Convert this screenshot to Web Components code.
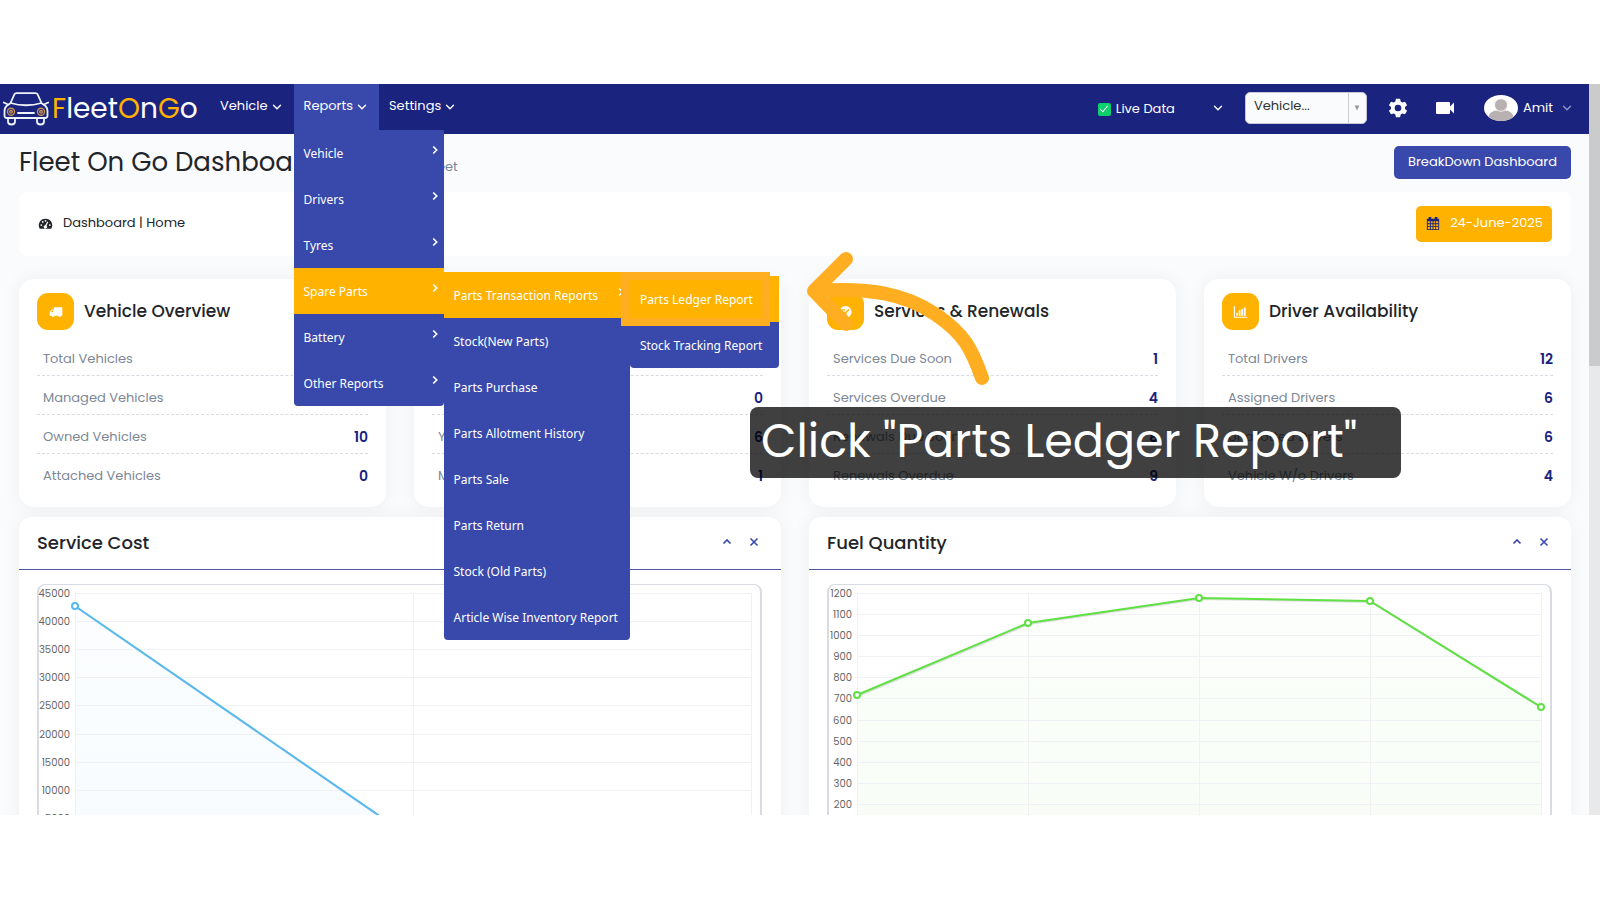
<!DOCTYPE html>
<html lang="en">
<head>
<meta charset="utf-8">
<meta name="viewport" content="width=device-width, initial-scale=1">
<title>Fleet On Go Dashboard</title>
<style>
html, body {
  margin: 0;
  background: #fff;
}

body {
  display: flex;
  box-sizing: border-box;
  height: 100vh;
  padding: 84px 0 85px;
  overflow: hidden;
  font-family: Poppins, Inter, sans-serif;
  font-size: 13px;
  line-height: 20px;
  color: #212529;

  --navy: #1a237e;
  --blue: #3949ab;
  --amber: #ffb300;
  --marker: #ffae22;
  --page: #fafbfd;
}
</style>
</head>
<body>

<fog-shell>
  <fog-navbar slot="top">
    <fog-nav-item label="Vehicle"></fog-nav-item>
    <fog-nav-item label="Reports" open>
      <fog-menu-item label="Vehicle" more></fog-menu-item>
      <fog-menu-item label="Drivers" more></fog-menu-item>
      <fog-menu-item label="Tyres" more></fog-menu-item>
      <fog-menu-item label="Spare Parts" more open>
        <fog-menu-item label="Parts Transaction Reports" more open>
          <fog-menu-item label="Parts Ledger Report" active marked></fog-menu-item>
          <fog-menu-item label="Stock Tracking Report"></fog-menu-item>
        </fog-menu-item>
        <fog-menu-item label="Stock(New Parts)"></fog-menu-item>
        <fog-menu-item label="Parts Purchase"></fog-menu-item>
        <fog-menu-item label="Parts Allotment History"></fog-menu-item>
        <fog-menu-item label="Parts Sale"></fog-menu-item>
        <fog-menu-item label="Parts Return"></fog-menu-item>
        <fog-menu-item label="Stock (Old Parts)"></fog-menu-item>
        <fog-menu-item label="Article Wise Inventory Report"></fog-menu-item>
      </fog-menu-item>
      <fog-menu-item label="Battery" more></fog-menu-item>
      <fog-menu-item label="Other Reports" more></fog-menu-item>
    </fog-nav-item>
    <fog-nav-item label="Settings"></fog-nav-item>
  </fog-navbar>

  <fog-page-head heading="Fleet On Go Dashboard" note="Manage Your Fleet"></fog-page-head>
  <fog-breadcrumb date="24-June-2025">Dashboard | Home</fog-breadcrumb>

  <fog-columns count="4">
    <fog-stat-card heading="Vehicle Overview" icon="truck">
      <fog-stat label="Total Vehicles">10</fog-stat>
      <fog-stat label="Managed Vehicles">0</fog-stat>
      <fog-stat label="Owned Vehicles">10</fog-stat>
      <fog-stat label="Attached Vehicles">0</fog-stat>
    </fog-stat-card>
    <fog-stat-card heading="Trips" icon="truck">
      <fog-stat label="Total">7</fog-stat>
      <fog-stat label="Today">0</fog-stat>
      <fog-stat label="Year">6</fog-stat>
      <fog-stat label="Month">1</fog-stat>
    </fog-stat-card>
    <fog-stat-card heading="Services &amp; Renewals" icon="gauge">
      <fog-stat label="Services Due Soon">1</fog-stat>
      <fog-stat label="Services Overdue">4</fog-stat>
      <fog-stat label="Renewals Due Soon">8</fog-stat>
      <fog-stat label="Renewals Overdue">9</fog-stat>
    </fog-stat-card>
    <fog-stat-card heading="Driver Availability" icon="bars">
      <fog-stat label="Total Drivers">12</fog-stat>
      <fog-stat label="Assigned Drivers">6</fog-stat>
      <fog-stat label="Unallotted Drivers">6</fog-stat>
      <fog-stat label="Vehicle W/o Drivers">4</fog-stat>
    </fog-stat-card>
  </fog-columns>

  <fog-columns count="2">
    <fog-panel heading="Service Cost">
      <fog-line-chart max="45000" step="5000" values="42700,1200,0" color="#56b9f0" gutter="36"></fog-line-chart>
    </fog-panel>
    <fog-panel heading="Fuel Quantity">
      <fog-line-chart max="1200" step="100" values="716,1060,1176,1160,659" color="#5fe043" gutter="28"></fog-line-chart>
    </fog-panel>
  </fog-columns>
</fog-shell>

<fog-callout>Click "Parts Ledger Report"</fog-callout>

<script>
const ICONS = {
  down: ['0 0 10 10', '<path d="M1.500 3.200 5 6.700 8.500 3.200" fill="none" stroke="currentColor" stroke-width="1.400" stroke-linecap="round"/>'],
  up: ['0 0 10 10', '<path d="M1.500 6.500 5 3 8.500 6.500" fill="none" stroke="currentColor" stroke-width="1.700"/>'],
  right: ['0 0 10 10', '<path d="M3.200 1.500 6.700 5 3.200 8.500" fill="none" stroke="currentColor" stroke-width="1.700"/>'],
  close: ['0 0 10 10', '<path d="M1.500 1.500l7 7M8.500 1.500l-7 7" fill="none" stroke="currentColor" stroke-width="1.600"/>'],
  caret: ['0 0 10 10', '<path d="M1 1h8L5 9z" fill="currentColor"/>'],
  gear: ['0 0 24 24', '<path fill="currentColor" fill-rule="evenodd" d="M9.500 1h5l.7 3.300 2 1.150 3.200-1.050 2.500 4.300-2.500 2.200v2.200l2.500 2.200-2.500 4.300-3.200-1.050-2 1.150-.7 3.300h-5l-.7-3.300-2-1.150-3.200 1.050-2.500-4.300 2.500-2.200v-2.200L1.100 8.700l2.500-4.300 3.200 1.050 2-1.150zM12 8a4 4 0 1 0 0 8 4 4 0 0 0 0-8z"/>'],
  camera: ['0 0 20 20', '<path fill="currentColor" d="M2 4h12a1 1 0 0 1 1 1v3.500l4-4v11l-4-4V15a1 1 0 0 1-1 1H2a1 1 0 0 1-1-1V5a1 1 0 0 1 1-1z"/>'],
  dash: ['0 0 16 16', '<path fill="currentColor" fill-rule="evenodd" d="M8 2a7.500 7.500 0 0 0-6.500 11.500h13A7.500 7.500 0 0 0 8 2zM2.200 9.200a1 1 0 1 0 2 0 1 1 0 1 0-2 0zM3.800 5.700a1 1 0 1 0 2 0 1 1 0 1 0-2 0zM7 4.300a1 1 0 1 0 2 0 1 1 0 1 0-2 0zM11.900 9.200a1 1 0 1 0 2 0 1 1 0 1 0-2 0zM10.200 5l-2.500 4.300a1.900 1.900 0 1 0 1.500.6l2-4.300z"/>'],
  calendar: ['0 0 16 16', '<path fill="currentColor" fill-rule="evenodd" d="M1 3h2V1h3v2h4V1h3v2h2v13H1zM2 6v2.300h2.500V6zm3.500 0v2.300h2V6zm3 0v2.300h2V6zm3 0v2.300H14V6zM2 9.300v2.300h2.500V9.300zm3.500 0v2.300h2V9.300zm3 0v2.300h2V9.300zm3 0v2.300H14V9.300zM2 12.600V15h2.500v-2.400zm3.500 0V15h2v-2.400zm3 0V15h2v-2.400zm3 0V15H14v-2.400z"/>'],
  truck: ['0 0 16 16', '<path fill="currentColor" fill-rule="evenodd" d="M6 2.500h9a.8.8 0 0 1 .8.800v9h-1.300a1.800 1.800 0 0 1-3.500 0H7a1.800 1.800 0 0 1-3.500 0H1.400V8.300L3.600 5H6zM5.300 6.300H4.200L2.800 8.400h2.500z"/>'],
  gauge: ['0 0 16 16', '<path fill="currentColor" fill-rule="evenodd" d="M8 1a7 7 0 1 0 0 14A7 7 0 0 0 8 1zm3.500 3.300 1.200 1.200-3.300 3.300a1.700 1.700 0 1 1-1.200-1.200zM4 4.800h3.500v1.500H4z"/>'],
  bars: ['0 0 18 16', '<path fill="currentColor" d="M1 1h1.400v12.600H17V15H1zM4 9h2v3.500H4zM7 6h2v6.500H7zM10 4.500h2v8h-2zM13 2.500h2.200v10H13z"/>'],
  car: ['0 0 46 34', `<g fill="none" stroke="#eef2fb" stroke-width="1.800" stroke-linecap="round" stroke-linejoin="round">
    <path d="M7.500 11 11.500 2.200Q12 1.200 13.500 1.200h19q1.500 0 2 1L38.500 11M7.500 11Q23 15.500 38.500 11M7 11.500 3.500 14Q1.500 16 1.500 19v4.500Q1.500 26 4 26h38q2.500 0 2.500-2.500V19q0-3-2-5L39 11.500M5 12.500.8 10.500M41 12.500l4.200-2M15 21h16"/>
    <path d="M5 26.500v3q0 3 3.500 3t3.500-3v-3M34 26.500v3q0 3 3.500 3t3.500-3v-3"/></g>
    <g fill="none" stroke="#c9914a" stroke-width="1.400"><circle cx="8" cy="19.800" r="3.500"/><circle cx="8" cy="19.800" r="1.300"/><circle cx="38" cy="19.800" r="3.500"/><circle cx="38" cy="19.800" r="1.300"/></g>`],
  avatar: ['0 0 34 26', '<ellipse cx="17" cy="13" rx="17" ry="13" fill="#fff"/><path d="M4.500 22q1-6 8.500-6.500h8q7.500.5 8.500 6.500-5 4-12.500 4T4.500 22z" fill="#b9b0b1"/><ellipse cx="17" cy="10" rx="6.500" ry="6.300" fill="#b9b0b1" stroke="#fff" stroke-width=".8"/>'],
};

// Attach an open root with the element's styles and markup
function render(el, css, html) {
  const root = el.shadowRoot || el.attachShadow({ mode: 'open' });
  const template = document.createElement('template');
  template.innerHTML = `<style>${css}</style>${html}`;
  root.replaceChildren(template.content.cloneNode(true));
  return root;
}

class FogIcon extends HTMLElement {
  connectedCallback() {
    const [box, body] = ICONS[this.getAttribute('name')];
    render(this, `
      :host { display: block; flex: none; width: 10px; height: 10px; }
      svg { display: block; width: 100%; height: 100%; }
    `, `<svg viewBox="${box}" aria-hidden="true">${body}</svg>`);
  }
}

class FogShell extends HTMLElement {
  connectedCallback() {
    render(this, `
      :host { display: flex; flex: 1; min-width: 0; overflow: hidden; background: var(--page); }
      .view { flex: 1; min-width: 0; }
      main { display: flex; flex-direction: column; padding: 12px 18px 0 19px; }
      .track { flex: none; width: 11px; background: #e9e9e9; }
      .thumb { height: 282px; background: #cbcbcb; }
    `, `
      <div class="view">
        <slot name="top"></slot>
        <main><slot></slot></main>
      </div>
      <div class="track" aria-hidden="true"><div class="thumb"></div></div>
    `);
  }
}

class FogNavbar extends HTMLElement {
  connectedCallback() {
    render(this, `
      :host { display: flex; height: 50px; background: var(--navy); color: #fff; position: relative; z-index: 5; }
      .brand { display: flex; align-items: center; gap: 3px; width: 210px; padding-left: 3px; box-sizing: border-box;
        color: #fff; text-decoration: none; font-size: 28px; line-height: 48px; }
      .brand fog-icon { width: 46px; height: 34px; }
      .brand b { color: var(--amber); font-weight: 400; }
      nav { display: flex; align-items: flex-start; }
      .tools { display: flex; align-items: center; margin-left: auto; padding: 0 17px 2px 0; }
      label { display: flex; align-items: center; gap: 5px; padding-top: 2px; }
      input { appearance: none; width: 13px; height: 13px; margin: 0; border-radius: 2px; background: #0ccf6e; display: grid; }
      input:checked::before { content: ""; width: 3px; height: 7px; margin: 1px auto; border: solid #fff; border-width: 0 1px 1px 0; rotate: 40deg; }
      button { display: flex; align-items: center; padding: 0; border: 0; background: none; color: #fff; font: inherit; cursor: pointer; }
      .source { margin: 0 22px 0 38px; }
      .pick { display: grid; width: 122px; height: 32px; }
      .pick > * { grid-area: 1 / 1; }
      select { appearance: none; box-sizing: border-box; width: 100%; padding: 0 8px 4px; border: 1px solid #c5c8dc;
        border-radius: 5px; background: var(--page); color: #333; font: inherit; }
      .arrow { justify-self: end; display: grid; place-items: center; width: 17px; margin: 1px 1px 1px 0; border-left: 1px solid #ccc;
        color: #999; pointer-events: none; }
      .arrow fog-icon { width: 6px; height: 6px; }
      .gear { margin: 0 27px 0 21px; }
      .gear fog-icon { width: 20px; height: 20px; }
      .camera { margin-right: 29px; }
      .camera fog-icon { width: 20px; height: 20px; }
      .user { gap: 5px; }
      .user .face { width: 34px; height: 26px; }
      .user .more { margin-left: 4px; color: #8f95c9; }
    `, `
      <a class="brand" href="#"><fog-icon name="car"></fog-icon><span><b>F</b>leet<b>O</b>n<b>G</b>o</span></a>
      <nav><slot></slot></nav>
      <div class="tools">
        <label><input type="checkbox" checked>Live Data</label>
        <button class="source" aria-label="Data source"><fog-icon name="down"></fog-icon></button>
        <div class="pick">
          <select aria-label="Vehicle"><option>Vehicle...</option></select>
          <span class="arrow"><fog-icon name="caret"></fog-icon></span>
        </div>
        <button class="gear" aria-label="Preferences"><fog-icon name="gear"></fog-icon></button>
        <button class="camera" aria-label="Camera"><fog-icon name="camera"></fog-icon></button>
        <button class="user"><fog-icon class="face" name="avatar"></fog-icon>Amit<fog-icon class="more" name="down"></fog-icon></button>
      </div>
    `);
  }
}

class FogNavItem extends HTMLElement {
  connectedCallback() {
    render(this, `
      :host { display: block; position: relative; }
      :host([open]) { background: var(--blue); }
      a { display: flex; align-items: center; gap: 4px; height: 46px; padding: 0 12px 0 10px; box-sizing: border-box;
        color: #fff; text-decoration: none; font-size: 13px; }
      a span { padding-bottom: 3px; }
      .menu { display: none; position: absolute; top: 100%; left: 0; width: 150px; background: var(--blue); border-radius: 0 0 4px 4px; }
      :host([open]) .menu { display: block; }
    `, `
      <a href="#"><span>${this.getAttribute('label')}</span><fog-icon name="down"></fog-icon></a>
      <div class="menu"><slot></slot></div>
    `);
  }
}

class FogMenuItem extends HTMLElement {
  connectedCallback() {
    const more = this.hasAttribute('more') ? '<fog-icon name="right"></fog-icon>' : '';
    const sub = this.children.length ? '<div class="menu"><slot></slot></div>' : '';
    render(this, `
      :host { display: block; position: relative; font-family: "Segoe UI", "Noto Sans", sans-serif; font-size: 12px; }
      :host([open]), :host([active]) { background: var(--amber); }
      a { display: flex; align-items: center; justify-content: space-between; gap: 14px; height: 46px; padding: 2px 12px 0 10px;
        box-sizing: border-box; color: #fff; text-decoration: none; white-space: nowrap; }
      fog-icon { margin-right: -8px; padding-bottom: 9px; }
      .menu { position: absolute; top: 4px; left: 100%; width: max-content; min-width: 149px; background: var(--blue); border-radius: 0 0 4px 4px; }
      :host([marked])::after { content: ""; position: absolute; inset: -4px 9px -4px -9px; border: 8px solid var(--marker); }
    `, `<a href="#">${this.getAttribute('label')}${more}</a>${sub}`);
  }
}

class FogPageHead extends HTMLElement {
  connectedCallback() {
    render(this, `
      :host { display: flex; align-items: center; justify-content: space-between; height: 33px; }
      h1 { display: flex; align-items: baseline; gap: 17px; margin: 0; padding-top: 4px; font-size: 26px; font-weight: 400; line-height: 33px; }
      small { font-size: 13px; color: #7b8794; }
      button { height: 33px; padding: 0 14px 2px; border: 0; border-radius: 5px; background: var(--blue); color: #fff; font: inherit; }
    `, `
      <h1>${this.getAttribute('heading')} <small>${this.getAttribute('note')}</small></h1>
      <button>BreakDown Dashboard</button>
    `);
  }
}

class FogBreadcrumb extends HTMLElement {
  connectedCallback() {
    render(this, `
      :host { display: flex; align-items: center; gap: 10px; height: 64px; margin: 13px 0 23px; padding: 0 19px; background: #fff; border-radius: 8px; }
      .home { width: 15px; height: 14px; }
      span { padding-bottom: 2px; }
      button { display: flex; align-items: center; gap: 10px; height: 36px; margin-left: auto; padding: 0 9px 2px 10px; border: 0; border-radius: 5px;
        background: var(--amber); color: #fff; font: inherit; }
      button fog-icon { width: 14px; height: 14px; color: var(--navy); }
    `, `
      <fog-icon class="home" name="dash"></fog-icon>
      <span><slot></slot></span>
      <button><fog-icon name="calendar"></fog-icon>${this.getAttribute('date')}</button>
    `);
  }
}

class FogColumns extends HTMLElement {
  connectedCallback() {
    render(this, `
      :host { display: grid; grid-template-columns: repeat(${this.getAttribute('count')}, minmax(0, 1fr)); gap: 28px; margin-bottom: 10px; }
    `, '<slot></slot>');
  }
}

class FogStatCard extends HTMLElement {
  connectedCallback() {
    render(this, `
      :host { display: block; padding: 14px 18px; background: #fff; border-radius: 15px; box-shadow: 0 0 20px rgba(0, 0, 0, .05); }
      header { display: flex; align-items: center; gap: 10px; margin-bottom: 7px; }
      .badge { display: grid; place-items: center; width: 37px; height: 37px; border-radius: 11px; background: var(--amber); color: #fff; }
      .badge fog-icon { width: 15px; height: 14px; }
      h2 { margin: 0; padding-bottom: 2px; font-size: 17px; font-weight: 500; line-height: 24px; }
    `, `
      <header><span class="badge"><fog-icon name="${this.getAttribute('icon')}"></fog-icon></span><h2>${this.getAttribute('heading').replace('&', '&amp;')}</h2></header>
      <slot></slot>
    `);
  }
}

class FogStat extends HTMLElement {
  connectedCallback() {
    render(this, `
      :host { display: flex; justify-content: space-between; height: 20px; padding: 12px 0 6px 6px; border-bottom: 1px dashed #d9dbe3; color: #7d8896; }
      :host(:last-child) { border-bottom-color: transparent; }
      b { font-size: 14px; font-weight: 600; color: var(--navy); }
    `, `<span>${this.getAttribute('label')}</span><b><slot></slot></b>`);
  }
}

class FogPanel extends HTMLElement {
  connectedCallback() {
    render(this, `
      :host { display: block; background: #fff; border-radius: 12px; box-shadow: 0 0 20px rgba(0, 0, 0, .05); }
      header { display: flex; align-items: center; height: 52px; padding: 0 22px 0 18px; border-bottom: 1px solid #4c59a3; }
      h2 { flex: 1; margin: 0; font-size: 18px; font-weight: 500; line-height: 24px; }
      button { display: flex; padding: 0 0 3px; margin-left: 17px; border: 0; background: none; color: var(--blue); }
      .body { padding: 14px 19px 14px 18px; }
    `, `
      <header>
        <h2>${this.getAttribute('heading')}</h2>
        <button aria-label="Collapse"><fog-icon name="up"></fog-icon></button>
        <button aria-label="Close"><fog-icon name="close"></fog-icon></button>
      </header>
      <div class="body"><slot></slot></div>
    `);
  }
}

class FogLineChart extends HTMLElement {
  connectedCallback() {
    this.draw();
    // Redraw when the panel changes width
    new ResizeObserver(() => this.draw()).observe(this);
  }

  draw() {
    const width = this.clientWidth;
    if (width === this.drawnWidth) return;
    this.drawnWidth = width;

    const max = Number(this.getAttribute('max'));
    const step = Number(this.getAttribute('step'));
    const color = this.getAttribute('color');
    const left = Number(this.getAttribute('gutter'));
    const values = this.getAttribute('values').split(',').map(Number);
    const top = 8;
    const height = 253;
    const right = width - 9;
    const yOf = v => Math.round(top + height - v / max * height);
    const points = values.map((v, i) => [Math.round(left + (right - left) * i / (values.length - 1)), yOf(v)]);
    const line = points.map(p => p.join(' ')).join(' L');

    let grid = '';
    let labels = '';
    for (let v = 0; v <= max; v += step) {
      grid += `<path d="M${left} ${yOf(v)}H${right}"/>`;
      labels += `<text x="${left - 5}" y="${yOf(v) + 4}">${v}</text>`;
    }
    points.forEach(([x]) => {
      grid += `<path d="M${x} ${top}V${top + height}"/>`;
    });

    render(this, `
      :host { display: block; border: 1px solid #d9dbe3; border-left-width: 2px; border-right-width: 2px; border-radius: 8px; }
      svg { display: block; width: 100%; height: 285px; overflow: visible; }
      text { font-size: 10px; fill: #666; text-anchor: end; }
    `, `
      <svg role="img" aria-label="Line chart">
        <defs><linearGradient id="fade" x2="0" y2="1"><stop offset="0" stop-color="${color}" stop-opacity=".02"/><stop offset="1" stop-color="${color}" stop-opacity=".05"/></linearGradient></defs>
        <path d="M${line} L${right} ${top + height} L${left} ${top + height}Z" fill="url(#fade)"/>
        <g stroke="#eff1f4" stroke-width="1" fill="none" shape-rendering="crispEdges">${grid}</g>
        <g>${labels}</g>
        <path d="M${line}" transform="translate(1 1)" fill="none" stroke="#000" stroke-opacity=".12" stroke-width="2"/>
        <path d="M${line}" fill="none" stroke="${color}" stroke-width="2"/>
        <g fill="#fff" stroke="${color}" stroke-width="2">${points.map(([x, y]) => `<circle cx="${x}" cy="${y}" r="3"/>`).join('')}</g>
      </svg>
    `);
  }
}

// Tutorial step drawn over the app: an arrow and its caption
class FogCallout extends HTMLElement {
  connectedCallback() {
    render(this, `
      :host { position: absolute; top: 250px; left: 750px; z-index: 10; }
      svg { display: block; width: 240px; height: 157px; margin-left: 50px; }
      p { width: max-content; margin: 0; padding: 1px 44px 4px 11px; border-radius: 8px; background: rgba(0, 0, 0, .75);
        color: #fff; font-size: 46px; line-height: 66px; }
    `, `
      <svg viewBox="0 0 240 157" aria-hidden="true">
        <path d="M46 9 14 41 46 74M16 41C70 37 105 44 135 64S172 100 182 128" fill="none" stroke="var(--marker)" stroke-width="14" stroke-linecap="round" stroke-linejoin="round"/>
      </svg>
      <p><slot></slot></p>
    `);
  }
}

customElements.define('fog-icon', FogIcon);
customElements.define('fog-shell', FogShell);
customElements.define('fog-navbar', FogNavbar);
customElements.define('fog-nav-item', FogNavItem);
customElements.define('fog-menu-item', FogMenuItem);
customElements.define('fog-page-head', FogPageHead);
customElements.define('fog-breadcrumb', FogBreadcrumb);
customElements.define('fog-columns', FogColumns);
customElements.define('fog-stat-card', FogStatCard);
customElements.define('fog-stat', FogStat);
customElements.define('fog-panel', FogPanel);
customElements.define('fog-line-chart', FogLineChart);
customElements.define('fog-callout', FogCallout);
</script>
</body>
</html>
